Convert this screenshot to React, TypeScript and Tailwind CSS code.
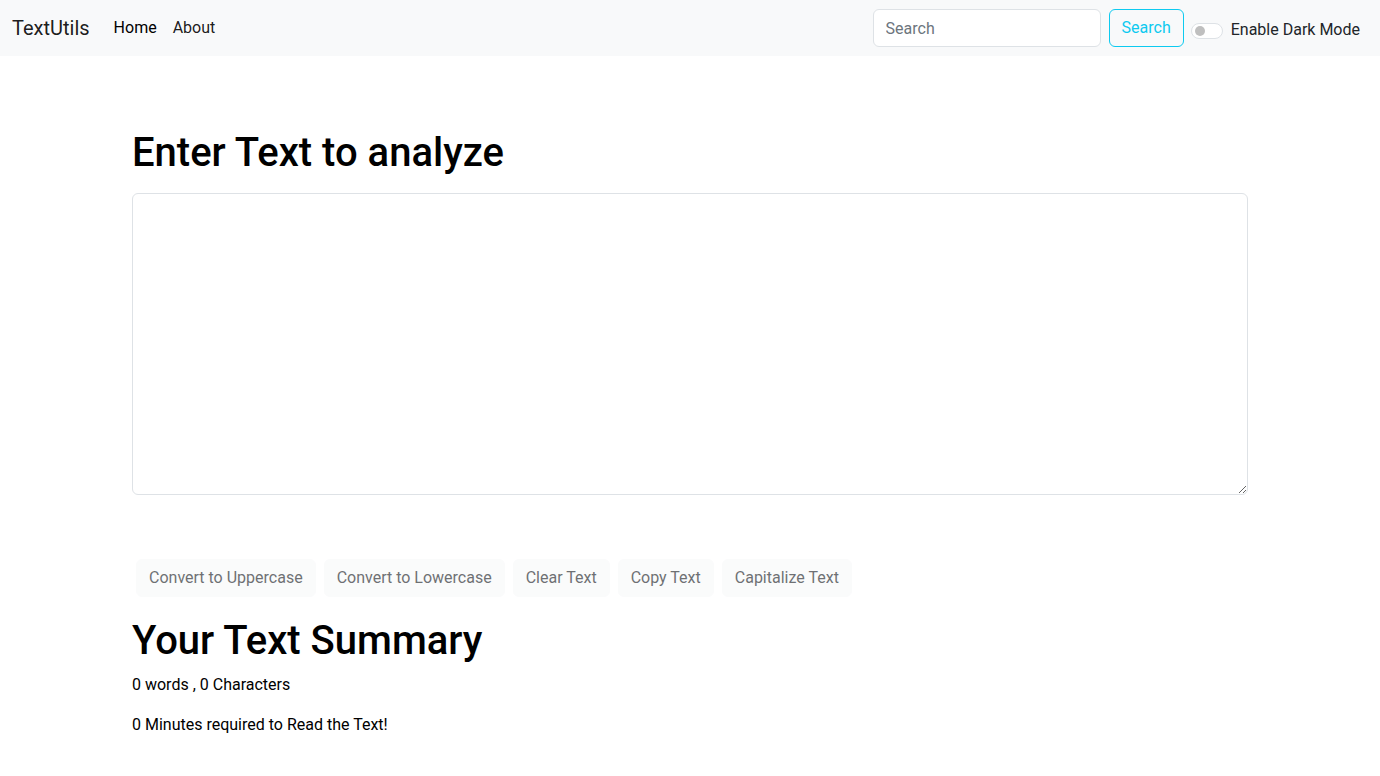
export default function App() {
  const buttons = ["Convert to Uppercase", "Convert to Lowercase", "Clear Text", "Copy Text", "Capitalize Text"];

  return (
    <div className="min-h-screen bg-white text-black font-['Roboto',sans-serif] text-base">
      {/* Navbar */}
      <nav className="h-14 bg-[#f8f9fa] flex items-center pl-3 pr-5">
        <span className="text-[20px] mr-4 text-black/90">TextUtils</span>
        <ul className="flex">
          <li className="px-2 text-black">Home</li>
          <li className="px-2 text-black/90">About</li>
        </ul>
        <div className="ml-auto flex items-center">
          <input
            type="search"
            placeholder="Search"
            className="w-[228px] h-[38px] px-3 border border-[#dee2e6] rounded-md bg-white placeholder:text-[#6c757d] outline-none"
          />
          <button className="ml-2 h-[38px] px-3 border border-[#0dcaf0] text-[#0dcaf0] rounded-md">Search</button>
          <label className="flex items-center ml-[7px] mt-[6px]">
            <span className="w-8 h-4 rounded-full border border-[#dee2e6] bg-white flex items-center pl-[3px]">
              <span className="w-[10px] h-[10px] rounded-full bg-[#bfbfbf]" />
            </span>
            <span className="ml-2 text-[#212529] -mt-[3px]">Enable Dark Mode</span>
          </label>
        </div>
      </nav>

      {/* Main */}
      <div className="max-w-[1140px] mx-auto px-3 pt-[73px]">
        <h1 className="text-[40px] font-medium leading-[1.2] mb-[16px]">Enter Text to analyze</h1>
        <textarea className="block w-full h-[302px] border border-[#dee2e6] rounded-md px-3 py-1.5 outline-none resize-y" />
        <div className="flex mt-[64px]">
          {buttons.map((b) => (
            <button
              key={b}
              disabled
              className="mx-1 h-[38px] px-3 rounded-md bg-[#f8f9fa] border border-[#f8f9fa] text-[#212529] opacity-65"
            >
              {b}
            </button>
          ))}
        </div>
        <h2 className="text-[40px] font-medium leading-[1.2] mt-[20px] mb-2">Your Text Summary</h2>
        <p className="mb-4">0 words , 0 Characters</p>
        <p>0 Minutes required to Read the Text!</p>
      </div>
    </div>
  );
}
